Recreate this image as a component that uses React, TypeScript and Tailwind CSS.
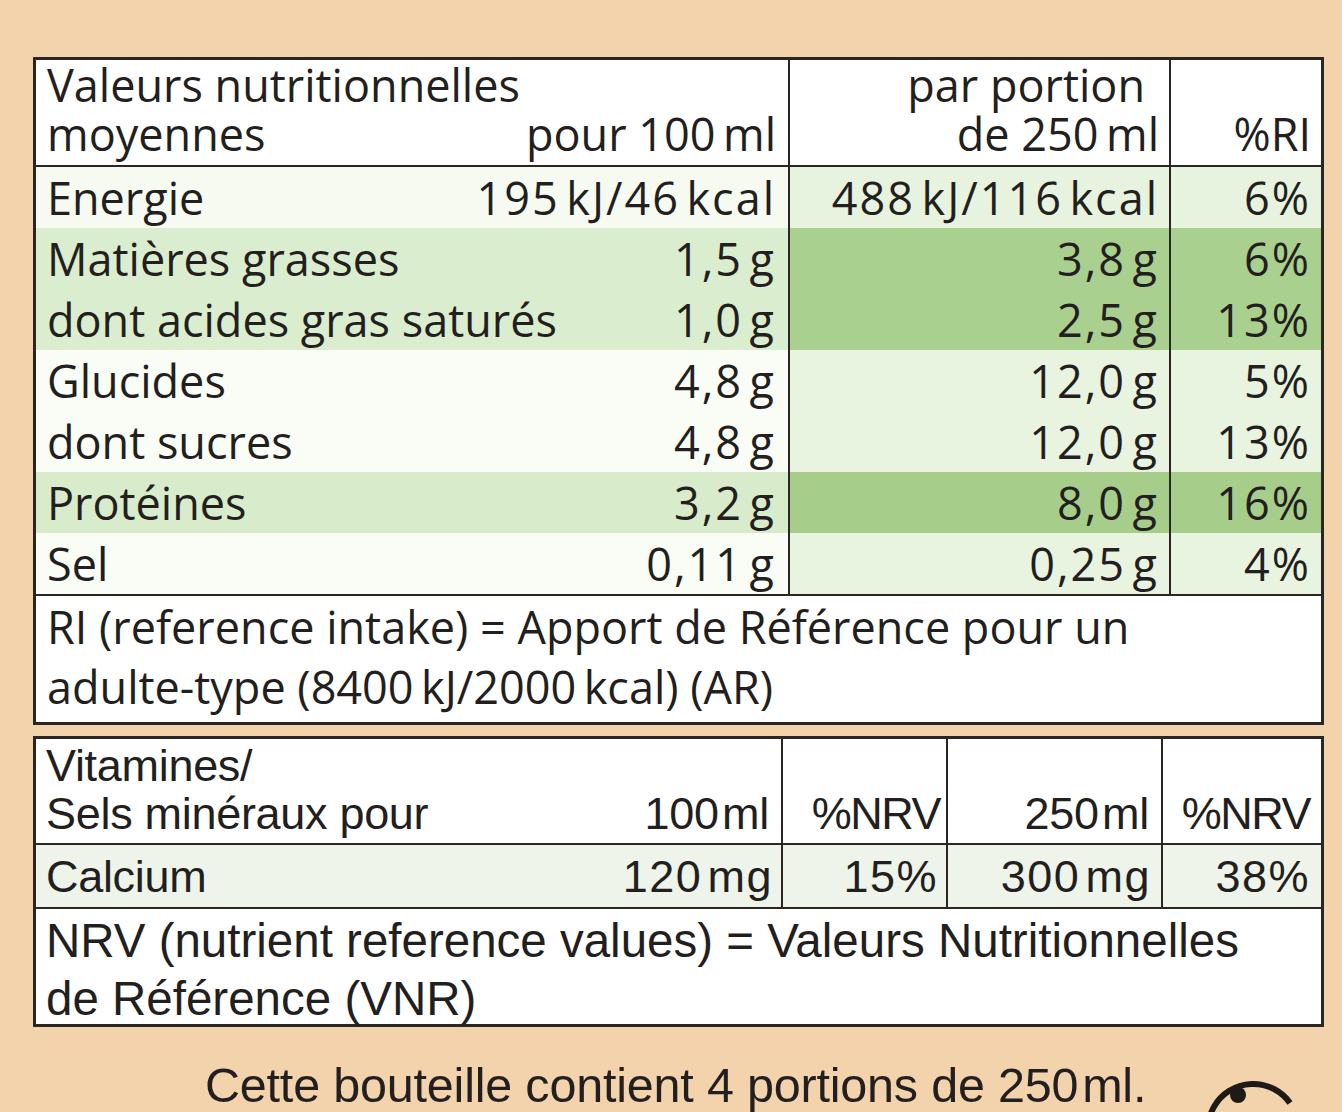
import React from "react";

const T = "\u2009";
const H = "\u200A";

type Row = { label: string; a: string; b: string; c: string; l: string; r: string };

const rows: Row[] = [
  { label: "Energie", a: `195${H}kJ/46${H}kcal`, b: `488${H}kJ/116${H}kcal`, c: `6%`, l: "bg-[#f6faf1]", r: "bg-[#e7f3de]" },
  { label: "Matières grasses", a: `1,5${H}g`, b: `3,8${H}g`, c: `6%`, l: "bg-[#dbedcf]", r: "bg-[#a9d08e]" },
  { label: "dont acides gras saturés", a: `1,0${H}g`, b: `2,5${H}g`, c: `13%`, l: "bg-[#dbedcf]", r: "bg-[#a9d08e]" },
  { label: "Glucides", a: `4,8${H}g`, b: `12,0${H}g`, c: `5%`, l: "bg-[#fafcf6]", r: "bg-[#e8f4e0]" },
  { label: "dont sucres", a: `4,8${H}g`, b: `12,0${H}g`, c: `13%`, l: "bg-[#fafcf6]", r: "bg-[#e8f4e0]" },
  { label: "Protéines", a: `3,2${H}g`, b: `8,0${H}g`, c: `16%`, l: "bg-[#d8ebca]", r: "bg-[#a6ce8a]" },
  { label: "Sel", a: `0,11${H}g`, b: `0,25${H}g`, c: `4%`, l: "bg-[#fafcf6]", r: "bg-[#e8f4e0]" },
];

export default function App() {
  return (
    <div className="w-[1342px] h-[1112px] overflow-hidden bg-[#f2d3ac] text-[#231f20] pt-[57px] pl-[33px]">
      {/* Table 1 */}
      <div
        className="w-[1291px] border-[3px] border-[#2b2624] bg-white text-[45px]"
        style={{ fontFamily: '"Open Sans", sans-serif' }}
      >
        <div className="grid grid-cols-[754px_381px_1fr]">
          {/* header */}
          <div className="border-r-2 border-b-2 border-[#2b2624] h-[107px] pl-[11px] pr-[12px] leading-[49px]">
            <div>Valeurs nutritionnelles</div>
            <div className="flex justify-between">
              <span>moyennes</span>
              <span>pour 100{T}ml</span>
            </div>
          </div>
          <div className="border-r-2 border-b-2 border-[#2b2624] h-[107px] pr-[10px] leading-[49px] text-right">
            <div className="pr-[14px]">par portion</div>
            <div>de 250{T}ml</div>
          </div>
          <div className="border-b-2 border-[#2b2624] h-[107px] pr-[10px] pt-[49px] leading-[49px] text-right">
            %RI
          </div>

          {rows.map((r) => (
            <React.Fragment key={r.label}>
              <div className={`${r.l} border-r-2 border-[#2b2624] h-[61px] pl-[11px] pr-[12px] flex items-center justify-between leading-none`}>
                <span>{r.label}</span>
                <span className="tracking-[2px]">{r.a}</span>
              </div>
              <div className={`${r.r} border-r-2 border-[#2b2624] h-[61px] pr-[10px] flex items-center justify-end leading-none`}>
                <span className="tracking-[2px]">{r.b}</span>
              </div>
              <div className={`${r.r} h-[61px] pr-[10px] flex items-center justify-end leading-none`}>
                <span className="tracking-[2px]">{r.c}</span>
              </div>
            </React.Fragment>
          ))}

          <div className="col-span-3 border-t-2 border-[#2b2624] h-[128px] pl-[11px] pt-[1px] leading-[60px]">
            <div>RI (reference intake) = Apport de Référence pour un</div>
            <div>adulte-type (8400{T}kJ/2000{T}kcal) (AR)</div>
          </div>
        </div>
      </div>

      {/* Table 2 */}
      <div
        className="mt-[11px] w-[1291px] border-[3px] border-[#2b2624] bg-white text-[45px] tracking-[-0.3px]"
        style={{ fontFamily: '"Liberation Sans", Arial, sans-serif' }}
      >
        <div className="grid grid-cols-[747px_165px_215px_1fr]">
          <div className="border-r-2 border-b-2 border-[#2b2624] h-[106px] pl-[10px] pr-[12px] pt-[3px] leading-[48px]">
            <div>Vitamines/</div>
            <div className="flex justify-between">
              <span>Sels minéraux pour</span>
              <span>100{H}ml</span>
            </div>
          </div>
          <div className="border-r-2 border-b-2 border-[#2b2624] h-[106px] pr-[6px] pt-[51px] leading-[48px] text-right tracking-[-1.5px]">
            %NRV
          </div>
          <div className="border-r-2 border-b-2 border-[#2b2624] h-[106px] pr-[12px] pt-[51px] leading-[48px] text-right">
            250{H}ml
          </div>
          <div className="border-b-2 border-[#2b2624] h-[106px] pr-[11px] pt-[51px] leading-[48px] text-right tracking-[-1.5px]">
            %NRV
          </div>

          <div className="bg-[#eef4ea] border-r-2 border-[#2b2624] h-[62px] pl-[10px] pr-[8px] flex items-center justify-between leading-none">
            <span>Calcium</span>
            <span className="tracking-[1.5px]">120{H}mg</span>
          </div>
          <div className="bg-[#eef4ea] border-r-2 border-[#2b2624] h-[62px] pr-[8px] flex items-center justify-end leading-none">
            <span className="tracking-[1.5px]">15%</span>
          </div>
          <div className="bg-[#eef4ea] border-r-2 border-[#2b2624] h-[62px] pr-[10px] flex items-center justify-end leading-none">
            <span className="tracking-[1.5px]">300{H}mg</span>
          </div>
          <div className="bg-[#eef4ea] h-[62px] pr-[11px] flex items-center justify-end leading-none">
            <span className="tracking-[1.5px]">38%</span>
          </div>

          <div className="col-span-4 border-t-2 border-[#2b2624] h-[117px] pl-[10px] pt-[3px] leading-[58px] text-[47.5px] tracking-[0px]">
            <div>NRV (nutrient reference values) = Valeurs Nutritionnelles</div>
            <div>de Référence (VNR)</div>
          </div>
        </div>
      </div>

      {/* Bottom line */}
      <div className="flex items-start pl-[172px] pt-[34px]" style={{ fontFamily: '"Liberation Sans", Arial, sans-serif' }}>
        <div className="text-[48.5px] leading-none tracking-[-0.2px]">
          Cette bouteille contient 4 portions de 250{H}ml.
        </div>
        <svg className="ml-[58px] mt-[12px] shrink-0" width="100" height="100" viewBox="0 0 100 100">
          <path d="M 86 30 A 45 45 0 1 0 92 42" fill="none" stroke="#1e1a18" strokeWidth="6" />
          <circle cx="34" cy="22" r="8" fill="#1e1a18" />
        </svg>
      </div>
    </div>
  );
}
